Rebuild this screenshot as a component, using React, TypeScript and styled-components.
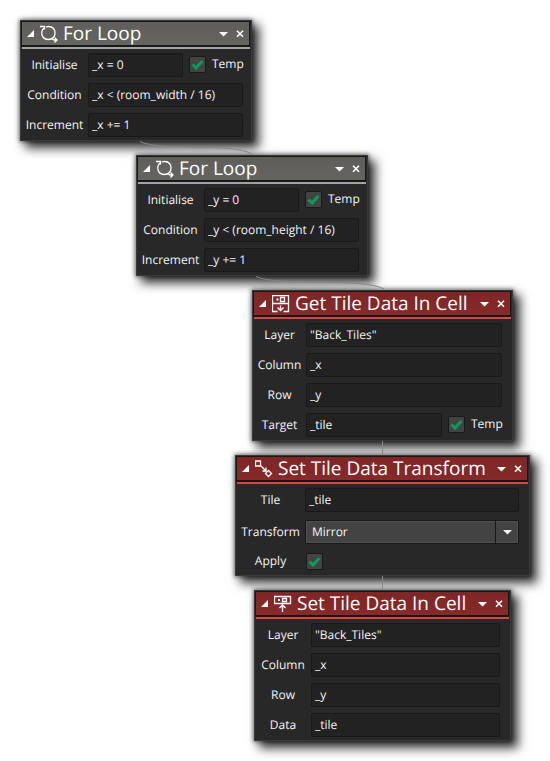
import React, { useId, useState } from "react";
import styled, { createGlobalStyle, css } from "styled-components";

const GlobalStyle = createGlobalStyle`
  * { box-sizing: border-box; }
  body { margin: 0; background: #fff; }
`;

type Tone = "grey" | "red";

const tones = {
  grey: { bar: "#656461", line: "#a0a4a4", glow: "#5f5e5b" },
  red: { bar: "#862a2a", line: "#dc4444", glow: "#7e2626" },
};

const Canvas = styled.main`
  position: relative;
  min-height: 100vh;
  overflow: hidden;
  background: #fff;
  color: #f4f4f4;
  font-family: "Open Sans", "Noto Sans", sans-serif;
  font-size: 12px;
  line-height: 16px;
  text-rendering: geometricPrecision;
`;

const Wires = styled.svg`
  position: absolute;
  top: 0;
  left: 0;
  fill: none;
  stroke: #868686;
  pointer-events: none;
`;

const Node = styled.section<{ $x: number; $y: number; $width: number }>`
  position: absolute;
  left: ${(p) => p.$x}px;
  top: ${(p) => p.$y}px;
  width: ${(p) => p.$width}px;
  border: 1px solid #3a3a3a;
  background: #282828;
  box-shadow: 0 0 4px 1px rgba(0, 0, 0, 0.5), 6px 6px 10px 1px rgba(0, 0, 0, 0.8);
`;

const Header = styled.header<{ $tone: Tone }>`
  display: flex;
  align-items: center;
  height: 26px;
  margin-right: 1px;
  padding: 0 5px;
  border: solid #171919;
  border-width: 1px 1px 2px;
  background: linear-gradient(${(p) => tones[p.$tone].glow}, ${(p) => tones[p.$tone].bar});
  color: #fff;
`;

const Rule = styled.div<{ $tone: Tone }>`
  height: 2px;
  margin: 0 1px;
  background: ${(p) => tones[p.$tone].line};
`;

const Title = styled.h2`
  flex: 1;
  margin: 0 0 0 5px;
  padding-bottom: 2px;
  font-size: 19px;
  font-weight: 400;
  line-height: 22px;
  white-space: nowrap;
`;

const HeaderButton = styled.button`
  display: flex;
  flex: none;
  padding: 0;
  border: 0;
  background: none;
  color: inherit;

  & + & {
    margin-left: 8px;
  }
`;

const Body = styled.div<{ $labels: number; $inset: number }>`
  display: grid;
  grid-template-columns: ${(p) => p.$labels}px minmax(0, 1fr);
  align-items: center;
  align-content: start;
  row-gap: 6px;
  min-height: 91px;
  padding: 4px ${(p) => p.$inset}px 3px 0;
`;

const Label = styled.label`
  text-align: center;
  white-space: nowrap;
`;

const Line = styled.div<{ $height?: number }>`
  display: flex;
  align-items: center;
  min-width: 0;
  height: ${(p) => p.$height ?? 24}px;
`;

const TextBox = styled.input`
  flex: 1;
  min-width: 0;
  width: 100%;
  height: 24px;
  padding: 0 3px 1px;
  border: 1px solid #191919;
  border-radius: 2px;
  outline: 0;
  background: #222;
  color: inherit;
  font: inherit;
  text-rendering: inherit;
`;

const TempLabel = styled.label`
  display: flex;
  flex: none;
  align-items: center;
  width: 55px;
  margin-left: 6px;
  margin-right: -1px;
  padding-bottom: 2px;
  gap: 6px;
  white-space: nowrap;
`;

const layer = css`
  grid-area: 1 / 1;
`;

const TickFrame = styled.span`
  display: grid;
  flex: none;
  width: 17px;
  height: 17px;
`;

const TickInput = styled.input`
  ${layer}
  appearance: none;
  width: 17px;
  height: 17px;
  margin: 0;
  border: 1px solid #191919;
  border-radius: 2px;
  background: #434343;
`;

const TickMark = styled.svg`
  ${layer}
  width: 17px;
  height: 17px;
  fill: none;
  stroke: #0b9a60;
  stroke-width: 3;
  pointer-events: none;
`;

const SelectFrame = styled.span`
  display: grid;
  flex: 1;
  align-items: center;
  height: 24px;
`;

const Select = styled.select`
  ${layer}
  appearance: none;
  width: 100%;
  height: 24px;
  padding: 0 28px 0 6px;
  border: 1px solid #191919;
  border-radius: 2px;
  background: #434343;
  box-shadow: inset 0 0 0 1px #505050;
  color: inherit;
  font: inherit;
  text-rendering: inherit;
`;

const SelectArrow = styled.span`
  ${layer}
  justify-self: end;
  display: flex;
  align-items: center;
  justify-content: center;
  width: 24px;
  height: 22px;
  border-left: 1px solid #191919;
  pointer-events: none;
`;

const FoldIcon = () => (
  <svg width="8" height="8" viewBox="0 0 8 8" fill="currentColor" aria-hidden="true">
    <path d="M7 0v7H0z" />
  </svg>
);

const MenuIcon = () => (
  <svg width="9" height="6" viewBox="0 0 9 6" fill="currentColor" aria-hidden="true">
    <path d="M0 1h9L4.500 5.500z" />
  </svg>
);

const CloseIcon = () => (
  <svg width="8" height="8" viewBox="0 0 8 8" fill="none" stroke="currentColor" strokeWidth="1.600" aria-hidden="true">
    <path d="M1 .8l6 6M7 .8l-6 6" />
  </svg>
);

type IconName = "loop" | "get" | "set" | "transform";

const icons: Record<IconName, React.ReactNode> = {
  loop: (
    <>
      <path d="M0 1.500h4.500v3" />
      <path d="M4 3C0 7 1.500 14.500 8.500 14.500c8.500 0 9-13 0-13-1 0-2 .2-2.500.500" />
      <path d="M11.500 13.500l2.500 1.500h3M14.500 12.500l2.500 2.500-2.500 2.500" />
    </>
  ),
  get: (
    <>
      <path d="M5.500 16.500h-5V.5h16v16h-5M.5 8.500h16M8.500 2.500h4v4h-4zM8.500 10.500v5M5.500 12.500l3 3 3-3" />
      <path d="M4.500 4.500h2" strokeWidth="2" />
    </>
  ),
  set: (
    <>
      <path d="M5.500 8.500h-5v-7h16v7h-5M8.500 3.500h4v3h-4zM8.500 10.500v6.500M5.500 13l3-3 3 3M4.500 8.500h8" />
      <path d="M4 5h2" strokeWidth="2" />
    </>
  ),
  transform: <path d="M.5 1h5v5h-5zM6 6l5 5M11 7.500v3.500H7.500M13.500 10.500l3 3-3 3-3-3z" />,
};

const BlockIcon = ({ name }: { name: IconName }) => (
  <svg width="18" height="18" viewBox="0 0 18 18" fill="none" stroke="currentColor" strokeWidth="1.300" aria-hidden="true">
    {icons[name]}
  </svg>
);

const IconSlot = styled.span`
  display: flex;
  flex: none;
  margin-left: 5px;
`;

type BlockProps = {
  x: number;
  y: number;
  width: number;
  labels: number;
  inset?: number;
  tone: Tone;
  icon: IconName;
  title: string;
  children: React.ReactNode;
};

const Block = ({ x, y, width, labels, inset = 8, tone, icon, title, children }: BlockProps) => (
  <Node $x={x} $y={y} $width={width} aria-label={title}>
    <Header $tone={tone}>
      <HeaderButton aria-label="Collapse">
        <FoldIcon />
      </HeaderButton>
      <IconSlot>
        <BlockIcon name={icon} />
      </IconSlot>
      <Title>{title}</Title>
      <HeaderButton aria-label="Menu">
        <MenuIcon />
      </HeaderButton>
      <HeaderButton aria-label="Close">
        <CloseIcon />
      </HeaderButton>
    </Header>
    <Rule $tone={tone} />
    <Body $labels={labels} $inset={inset}>
      {children}
    </Body>
  </Node>
);

const Tick = ({ id }: { id?: string }) => {
  const [on, setOn] = useState(true);
  return (
    <TickFrame>
      <TickInput id={id} type="checkbox" checked={on} onChange={() => setOn(!on)} />
      {on && (
        <TickMark viewBox="0 0 17 17" aria-hidden="true">
          <path d="M3.500 8.500l3.500 3.500 6.500-7" />
        </TickMark>
      )}
    </TickFrame>
  );
};

const Field = ({ label, value, temp }: { label: string; value: string; temp?: boolean }) => {
  const id = useId();
  return (
    <>
      <Label htmlFor={id}>{label}</Label>
      <Line>
        <TextBox id={id} defaultValue={value} spellCheck={false} />
        {temp && (
          <TempLabel>
            <Tick />
            Temp
          </TempLabel>
        )}
      </Line>
    </>
  );
};

const Choice = ({ label, options }: { label: string; options: string[] }) => {
  const id = useId();
  return (
    <>
      <Label htmlFor={id}>{label}</Label>
      <Line $height={28}>
        <SelectFrame>
          <Select id={id}>
            {options.map((o) => (
              <option key={o}>{o}</option>
            ))}
          </Select>
          <SelectArrow>
            <MenuIcon />
          </SelectArrow>
        </SelectFrame>
      </Line>
    </>
  );
};

const ToggleLine = styled(Line)`
  padding-left: 1px;
`;

const Toggle = ({ label }: { label: string }) => {
  const id = useId();
  return (
    <>
      <Label htmlFor={id}>{label}</Label>
      <ToggleLine $height={18}>
        <Tick id={id} />
      </ToggleLine>
    </>
  );
};

export default function App() {
  return (
    <>
      <GlobalStyle />
      <Canvas>
        <Block x={20} y={20} width={232} labels={67} tone="grey" icon="loop" title="For Loop">
          <Field label="Initialise" value="_x = 0" temp />
          <Field label="Condition" value="_x < (room_width / 16)" />
          <Field label="Increment" value="_x += 1" />
        </Block>
        <Block x={136} y={155} width={232} labels={67} tone="grey" icon="loop" title="For Loop">
          <Field label="Initialise" value="_y = 0" temp />
          <Field label="Condition" value="_y < (room_height / 16)" />
          <Field label="Increment" value="_y += 1" />
        </Block>
        <Block x={252} y={290} width={261} labels={53} inset={10} tone="red" icon="get" title="Get Tile Data In Cell">
          <Field label="Layer" value={'"Back_Tiles"'} />
          <Field label="Column" value="_x" />
          <Field label="Row" value="_y" />
          <Field label="Target" value="_tile" temp />
        </Block>
        <Block x={235} y={455} width={295} labels={69} inset={10} tone="red" icon="transform" title="Set Tile Data Transform">
          <Field label="Tile" value="_tile" />
          <Choice label="Transform" options={["Mirror", "Flip", "Rotate"]} />
          <Toggle label="Apply" />
        </Block>
        <Block x={254} y={590} width={257} labels={56} inset={10} tone="red" icon="set" title="Set Tile Data In Cell">
          <Field label="Layer" value={'"Back_Tiles"'} />
          <Field label="Column" value="_x" />
          <Field label="Row" value="_y" />
          <Field label="Data" value="_tile" />
        </Block>
        <Wires width="550" height="761" viewBox="0 0 550 761" aria-hidden="true">
          <path d="M140 141.500C162 152 230 142 252 154M256 276.500C278 287 362 277 384 289M382.500 441v14M382.500 576v14" />
        </Wires>
      </Canvas>
    </>
  );
}
